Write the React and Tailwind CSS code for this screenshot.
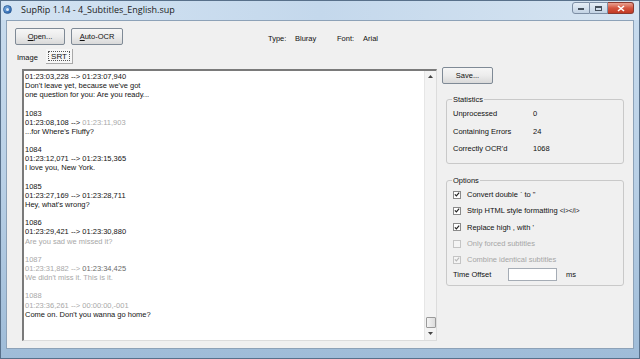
import React from 'react';

const LINES = [
  [['01:23:03,228 --> 01:23:07,940']],
  [["Don't leave yet, because we've got"]],
  [['one question for you: Are you ready...']],
  [['']],
  [['1083']],
  [['01:23:08,108 --> '], ['01:23:11,903', 'g']],
  [["...for Where's Fluffy?"]],
  [['']],
  [['1084']],
  [['01:23:12,071 --> 01:23:15,365']],
  [['I love you, New York.']],
  [['']],
  [['1085']],
  [['01:23:27,169 --> 01:23:28,711']],
  [["Hey, what's wrong?"]],
  [['']],
  [['1086']],
  [['01:23:29,421 --> 01:23:30,880']],
  [['Are you sad we missed it?', 'g']],
  [['']],
  [['1087', 'g']],
  [['01:23:31,882 --> ', 'g'], ['01:23:34,425', 'm']],
  [["We didn't miss it. This is it.", 'g']],
  [['']],
  [['1088', 'g']],
  [['01:23:36,261 --> 00:00:00,-001', 'g']],
  [["Come on. Don't you wanna go home?"]],
];

const SEG_COLORS = { g: 'text-[#a8a8a8]', m: 'text-[#6a6a6a]' };

function WinButton({ children, underline, className }) {
  return (
    <button className={`h-[17px] rounded-[2px] border border-[#7f8a96] bg-gradient-to-b from-[#f6f6f6] via-[#ececec] to-[#d9d9d9] text-[7.5px] text-[#111] ${className}`}>
      {underline ? <><span className="underline">{children[0]}</span>{children.slice(1)}</> : children}
    </button>
  );
}

function Check({ checked, disabled, label, extra }) {
  return (
    <div className="h-[16.3px] flex items-center">
      <span className={`w-[8px] h-[8px] border flex items-center justify-center ${disabled ? 'border-[#c4c4c4] bg-[#f4f4f4]' : 'border-[#8a8a8a] bg-white'}`}>
        {checked && (
          <svg width="7" height="7" viewBox="0 0 7 7">
            <path d="M1 3.3 L2.8 5.2 L6 1.3" fill="none" stroke={disabled ? '#b8b8b8' : '#222'} strokeWidth="1.4" />
          </svg>
        )}
      </span>
      <span className={`ml-[6px] ${disabled ? 'text-[#a6a6a6]' : ''}`}>{label}{extra}</span>
    </div>
  );
}

export default function App() {
  return (
    <div className="w-[640px] h-[359px] flex flex-col overflow-hidden border border-[#58708a] bg-gradient-to-b from-[#c9dcee] via-[#b9d0e6] to-[#9fbcd8] font-['Liberation_Sans',Arial,sans-serif] text-[7.5px] text-[#111]">
      {/* title bar */}
      <div className="h-[19px] flex items-start bg-gradient-to-r from-[#d3e3f2] via-[#c4d8ec] to-[#d6e4f1]">
        <span className="mt-[4px] ml-[2px] w-[9px] h-[9px] rounded-full bg-gradient-to-br from-[#7fb2e6] to-[#1f5aa6] border border-[#2d5f99] flex items-center justify-center">
          <span className="w-[3px] h-[3px] rounded-full bg-[#dbe9f7]" />
        </span>
        <span className="ml-[9px] mt-[3px] text-[9px] leading-[12px] text-[#1b1b1b] font-['Open_Sans',sans-serif]">SupRip 1.14 - 4_Subtitles_English.sup</span>
        <div className="ml-auto mr-[5px] mt-[1px] flex">
          <span className="w-[18px] h-[12px] rounded-l-[3px] border border-[#7d8ea4] bg-gradient-to-b from-[#e6eef6] to-[#c3d3e4] flex items-end justify-center pb-[3px]">
            <span className="w-[6px] h-[2px] bg-[#45505c]" />
          </span>
          <span className="w-[18px] h-[12px] border-y border-r border-[#7d8ea4] bg-gradient-to-b from-[#e6eef6] to-[#c3d3e4] flex items-center justify-center">
            <span className="w-[7px] h-[5px] border border-[#45505c] border-t-2" />
          </span>
          <span className="w-[26px] h-[12px] rounded-r-[3px] border-y border-r border-[#8a3a30] bg-gradient-to-b from-[#e9a191] via-[#d4553f] to-[#c23a24] flex items-center justify-center">
            <svg width="8" height="7" viewBox="0 0 8 7">
              <path d="M1 1 L7 6 M7 1 L1 6" stroke="#fff" strokeWidth="1.6" />
            </svg>
          </span>
        </div>
      </div>

      {/* client area */}
      <div className="mx-[5px] mb-[9px] flex-1 flex border border-[#8da2b8] bg-[#f0f0f0]">
        {/* left column */}
        <div className="w-[430px] pl-[8px] pt-[7px] flex flex-col">
          <div className="flex items-center">
            <WinButton underline className="w-[50px]">Open...</WinButton>
            <WinButton underline className="w-[52px] ml-[6px]">Auto-OCR</WinButton>
            <span className="ml-[145px] mt-[4px] w-[27px]">Type:</span>
            <span className="mt-[4px] w-[42px]">Bluray</span>
            <span className="mt-[4px] w-[26px]">Font:</span>
            <span className="mt-[4px]">Arial</span>
          </div>
          <div className="mt-[4px] h-[15px] flex items-center">
            <span className="ml-[2px] w-[29px] mt-[2px]">Image</span>
            <span className="w-[27px] h-[15px] p-[2px] border-r border-b border-[#a9a9a9] bg-[#f7f7f7]">
              <span className="h-full flex items-start justify-center border border-dotted border-[#555] leading-[9px] text-[8px]">SRT</span>
            </span>
          </div>
          <div className="mt-[5px] ml-[7px] w-[415px] h-[272px] flex border-t-2 border-l-2 border-[#7a7a7a] border-r border-b border-r-[#dcdcdc] border-b-[#dcdcdc] bg-white">
            <div className="flex-1 pl-[1px] pt-[1px] leading-[9.15px] text-[#141414]">
              {LINES.map((segs, i) => (
                <div key={i} className="h-[9.15px] whitespace-pre">
                  {segs.map(([t, c], j) => (
                    <span key={j} className={c ? SEG_COLORS[c] : ''}>{t}</span>
                  ))}
                </div>
              ))}
            </div>
            <div className="w-[12px] flex flex-col items-center bg-[#f3f3f3] border-l border-[#e6e6e6]">
              <svg className="mt-[4px]" width="5" height="3" viewBox="0 0 5 3"><path d="M0 3 L2.5 0 L5 3Z" fill="#444" /></svg>
              <span className="mt-auto w-[10px] h-[11px] rounded-[1px] border border-[#9a9a9a] bg-gradient-to-r from-[#f4f4f4] to-[#dcdcdc]" />
              <svg className="mt-[4px] mb-[5px]" width="5" height="3" viewBox="0 0 5 3"><path d="M0 0 L5 0 L2.5 3Z" fill="#444" /></svg>
            </div>
          </div>
        </div>

        {/* right column */}
        <div className="flex-1 pl-[5px] pt-[46px] flex flex-col items-start">
          <WinButton className="w-[51px] h-[16px]">Save...</WinButton>
          <fieldset className="mt-[11px] ml-[4px] w-[178px] border border-[#c9c9c9] rounded-[3px] px-[6px] pt-[1px] pb-[5px]">
            <legend className="px-[1px] -ml-[1px] leading-[9px]">Statistics</legend>
            {[['Unprocessed', '0'], ['Containing Errors', '24'], ['Correctly OCR\'d', '1068']].map(([k, v]) => (
              <div key={k} className="h-[17.5px] flex items-center">
                <span className="w-[80px]">{k}</span>
                <span>{v}</span>
              </div>
            ))}
          </fieldset>
          <fieldset className="mt-[12px] ml-[4px] w-[178px] border border-[#c9c9c9] rounded-[3px] px-[6px] pt-[2px] pb-[3px]">
            <legend className="px-[1px] -ml-[1px] leading-[9px]">Options</legend>
            <Check checked label={'Convert double ` to "'} />
            <Check checked label="Strip HTML style formatting " extra={<span className="text-[6.5px]">&lt;i&gt;&lt;/i&gt;</span>} />
            <Check checked label="Replace high , with '" />
            <Check disabled label="Only forced subtitles" />
            <Check checked disabled label="Combine identical subtitles" />
            <div className="h-[14px] flex items-center">
              <span className="w-[55px]">Time Offset</span>
              <span className="w-[49px] h-[13px] border border-[#a5acb5] bg-white" />
              <span className="ml-[9px]">ms</span>
            </div>
          </fieldset>
        </div>
      </div>
    </div>
  );
}
